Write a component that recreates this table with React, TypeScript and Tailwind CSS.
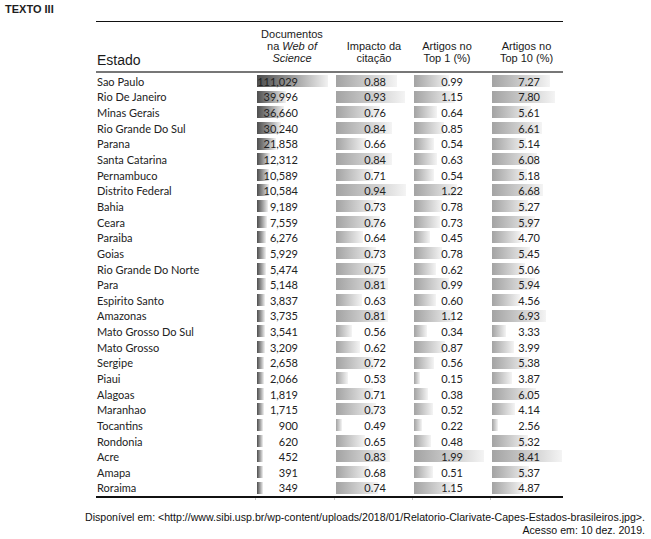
import React from "react";

type Row = [string, number, number, number, number];

const rows: Row[] = [
  ["Sao Paulo", 111029, 0.88, 0.99, 7.27],
  ["Rio De Janeiro", 39996, 0.93, 1.15, 7.8],
  ["Minas Gerais", 36660, 0.76, 0.64, 5.61],
  ["Rio Grande Do Sul", 30240, 0.84, 0.85, 6.61],
  ["Parana", 21858, 0.66, 0.54, 5.14],
  ["Santa Catarina", 12312, 0.84, 0.63, 6.08],
  ["Pernambuco", 10589, 0.71, 0.54, 5.18],
  ["Distrito Federal", 10584, 0.94, 1.22, 6.68],
  ["Bahia", 9189, 0.73, 0.78, 5.27],
  ["Ceara", 7559, 0.76, 0.73, 5.97],
  ["Paraiba", 6276, 0.64, 0.45, 4.7],
  ["Goias", 5929, 0.73, 0.78, 5.45],
  ["Rio Grande Do Norte", 5474, 0.75, 0.62, 5.06],
  ["Para", 5148, 0.81, 0.99, 5.94],
  ["Espirito Santo", 3837, 0.63, 0.6, 4.56],
  ["Amazonas", 3735, 0.81, 1.12, 6.93],
  ["Mato Grosso Do Sul", 3541, 0.56, 0.34, 3.33],
  ["Mato Grosso", 3209, 0.62, 0.87, 3.99],
  ["Sergipe", 2658, 0.72, 0.56, 5.38],
  ["Piaui", 2066, 0.53, 0.15, 3.87],
  ["Alagoas", 1819, 0.71, 0.38, 6.05],
  ["Maranhao", 1715, 0.73, 0.52, 4.14],
  ["Tocantins", 900, 0.49, 0.22, 2.56],
  ["Rondonia", 620, 0.65, 0.48, 5.32],
  ["Acre", 452, 0.83, 1.99, 8.41],
  ["Amapa", 391, 0.68, 0.51, 5.37],
  ["Roraima", 349, 0.74, 1.15, 4.87],
];

const range = (i: number) => {
  const vals = rows.map((r) => r[i] as number);
  return [Math.min(...vals), Math.max(...vals)];
};
const ranges = [1, 2, 3, 4].map(range);

// excel-style data bar: short minimum, scaled between min and max
const barWidth = (v: number, col: number, maxW: number) => {
  const [lo, hi] = ranges[col];
  return 6 + ((v - lo) / (hi - lo)) * (maxW - 6);
};

const body = { fontFamily: "Lato, 'Open Sans', sans-serif" };
const arial = { fontFamily: "'Liberation Sans', Arial, sans-serif" };

const BarCell = ({
  value,
  text,
  col,
  width,
  pr,
  dark,
}: {
  value: number;
  text: string;
  col: number;
  width: string;
  pr: string;
  dark?: boolean;
}) => (
  <div className={`relative h-full ${width}`}>
    <div
      className={`absolute left-[1px] top-[1.5px] h-[12px] bg-linear-to-r ${
        dark ? "from-[#4e4e4e] to-[#f2f2f2]" : "from-[#a3a3a3] to-[#f4f4f4]"
      }`}
      style={{ width: barWidth(value, col, col === 0 ? 71 : 70) }}
    />
    <div className={`relative h-full flex items-center justify-end ${pr}`}>{text}</div>
  </div>
);

export default function App() {
  return (
    <div className="w-[651px] h-[539px] bg-white text-[#1e1e1e] relative overflow-hidden">
      <div className="pl-[5px] pt-[3px] text-[11px] font-bold leading-[13px]" style={arial}>
        TEXTO III
      </div>

      <div className="ml-[96px] mt-[5px] w-[467px]">
        {/* header */}
        <div className="border-t border-[#111] h-[52px] flex items-end border-b-2 border-b-[#777]" style={arial}>
          <div className="w-[160px] pl-[1px] pb-[2px] text-[14px] leading-[17px] text-[#1a1a1a]">Estado</div>
          <div className="w-[79px] pr-[7px] pb-[7px] text-center text-[11px] leading-[12px] text-[#1a1a1a]">
            Documentos
            <br />
            na <i>Web of</i>
            <br />
            <i>Science</i>
          </div>
          <div className="w-[78px] pb-[7px] text-center text-[11px] leading-[12px] text-[#1a1a1a]">
            Impacto da
            <br />
            citação
          </div>
          <div className="w-[78px] pr-[10px] pb-[7px] text-center text-[11px] leading-[12px] text-[#1a1a1a]">
            Artigos no
            <br />
            Top 1 (%)
          </div>
          <div className="w-[72px] pr-[1px] pb-[7px] text-center text-[11px] leading-[12px] text-[#1a1a1a]">
            Artigos no
            <br />
            Top 10 (%)
          </div>
        </div>

        {/* rows */}
        <div className="text-[11px] leading-[13px] text-[#222] pt-[0.5px]" style={body}>
          {rows.map(([name, doc, imp, t1, t10]) => (
            <div key={name} className="flex h-[15.65px]">
              <div className="w-[160px] pl-[1px] flex items-center">{name}</div>
              <BarCell value={doc} text={doc.toLocaleString("en-US")} col={0} width="w-[79px]" pr="pr-[37px]" dark />
              <BarCell value={imp} text={imp.toFixed(2)} col={1} width="w-[78px]" pr="pr-[27px]" />
              <BarCell value={t1} text={t1.toFixed(2)} col={2} width="w-[78px]" pr="pr-[28px]" />
              <BarCell value={t10} text={t10.toFixed(2)} col={3} width="w-[72px]" pr="pr-[23px]" />
            </div>
          ))}
        </div>

        {/* bottom rule with ticks */}
        <div className="border-t-2 border-[#111] flex h-[4px]">
          <div className="w-[160px] border-r border-[#c8c8c8]" />
          <div className="w-[79px] border-r border-[#c8c8c8]" />
          <div className="w-[78px] border-r border-[#c8c8c8]" />
          <div className="w-[78px] border-r border-[#c8c8c8]" />
        </div>
      </div>

      <div className="mt-[11px] pr-[6px] text-right text-[10.6px] leading-[13px] text-[#111]" style={arial}>
        <div>
          Disponível em: &lt;http://www.sibi.usp.br/wp-content/uploads/2018/01/Relatorio-Clarivate-Capes-Estados-brasileiros.jpg&gt;.
        </div>
        <div>Acesso em: 10 dez. 2019.</div>
      </div>
    </div>
  );
}
